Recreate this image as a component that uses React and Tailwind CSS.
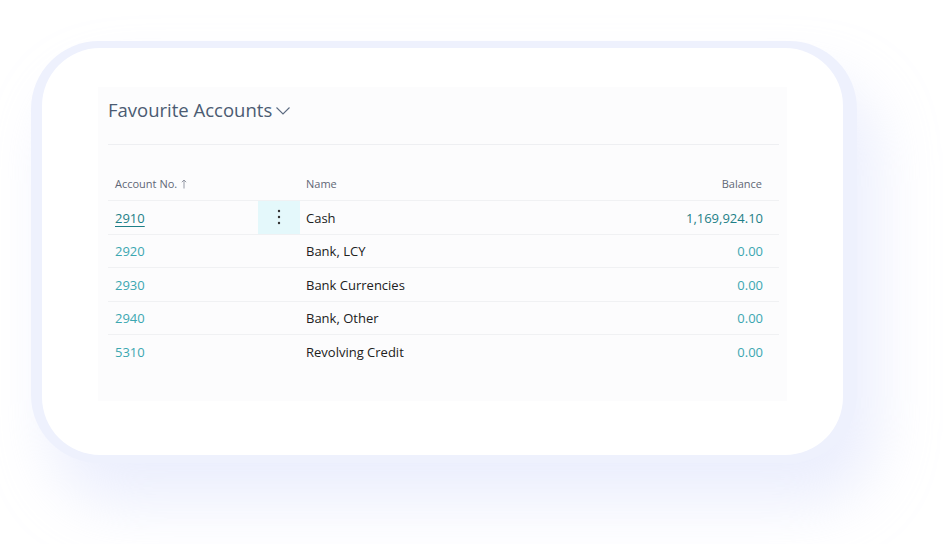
import React from "react";

const rows = [
  { no: "2910", name: "Cash", balance: "1,169,924.10", active: true },
  { no: "2920", name: "Bank, LCY", balance: "0.00" },
  { no: "2930", name: "Bank Currencies", balance: "0.00" },
  { no: "2940", name: "Bank, Other", balance: "0.00" },
  { no: "5310", name: "Revolving Credit", balance: "0.00" },
];

function Chevron() {
  return (
    <svg width="16" height="10" viewBox="0 0 16 10" className="ml-[3px] mt-[3px]">
      <path d="M1.5 1.5 L8 8 L14.5 1.5" fill="none" stroke="#5b6a80" strokeWidth="1.1" />
    </svg>
  );
}

export default function App() {
  return (
    <div
      className="w-[947px] h-[544px] bg-white overflow-hidden pl-[31px] pt-[41px]"
      style={{ fontFamily: '"Segoe UI", "Open Sans", sans-serif' }}
    >
      {/* outer frame */}
      <div className="w-[826px] h-[422px] rounded-[68px] bg-[#eef1fd] pt-[7px] pl-[11px] pr-[14px] pb-[8px] shadow-[20px_40px_60px_rgba(205,212,250,0.4)]">
        <div className="w-full h-full rounded-[58px] bg-white pt-[39px] pl-[56px]">
          {/* panel */}
          <div className="w-[689px] h-[314px] bg-[#fcfcfd] pl-[10px] pr-[8px]">
            <div className="h-[58px] flex items-center border-b border-[#eeeff2] pb-[12px]">
              <span className="text-[18.5px] text-[#4b5b72]">Favourite Accounts</span>
              <Chevron />
            </div>

            {/* header */}
            <div className="h-[56px] flex items-end pb-[8px] text-[11px] text-[#5f6776] border-b border-[#f0f1f3]">
              <div className="w-[150px] pl-[7px] flex items-center gap-[4px]">
                Account No.
                <svg width="6" height="10" viewBox="0 0 6 10">
                  <path d="M3 9.5 V1 M0.8 3.2 L3 1 L5.2 3.2" fill="none" stroke="#8a909c" strokeWidth="0.9" />
                </svg>
              </div>
              <div className="w-[42px]" />
              <div className="flex-1 pl-[6px]">Name</div>
              <div className="pr-[17px]">Balance</div>
            </div>

            {rows.map((r, i) => (
              <div
                key={r.no}
                className={`h-[33.5px] flex items-center text-[13px] ${i < rows.length - 1 ? "border-b border-[#f0f1f3]" : ""}`}
              >
                <div className="w-[150px] pl-[7px] pt-[2px]">
                  <span className={r.active ? "text-[#1e7f87] underline underline-offset-[3px]" : "text-[#3ba7b1]"}>
                    {r.no}
                  </span>
                </div>
                <div className={`w-[42px] h-full flex items-center justify-center ${r.active ? "bg-[#e4f8fb]" : ""}`}>
                  {r.active && (
                    <svg width="4" height="16" viewBox="0 0 4 16">
                      <circle cx="2" cy="2" r="1.2" fill="#333" />
                      <circle cx="2" cy="8" r="1.2" fill="#333" />
                      <circle cx="2" cy="14" r="1.2" fill="#333" />
                    </svg>
                  )}
                </div>
                <div className="flex-1 pl-[6px] pt-[2px] text-[#212121]">{r.name}</div>
                <div className={`pr-[16px] pt-[2px] ${r.active ? "text-[#1e7f87]" : "text-[#3ba7b1]"}`}>{r.balance}</div>
              </div>
            ))}
          </div>
        </div>
      </div>
    </div>
  );
}
